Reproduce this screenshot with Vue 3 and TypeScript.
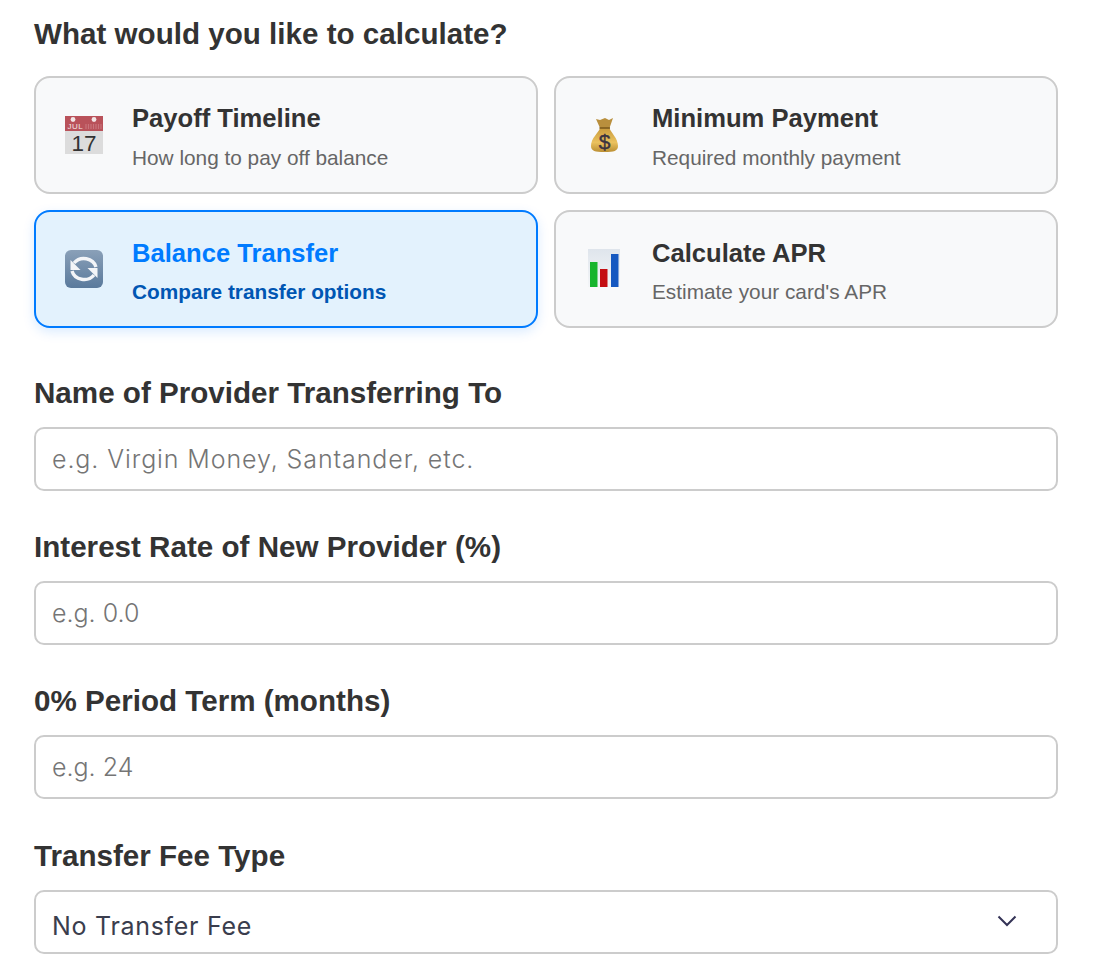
<script setup lang="ts">
interface Option { id: string; title: string; sub: string; active?: boolean }
const options: Option[] = [
  { id: 'cal', title: 'Payoff Timeline', sub: 'How long to pay off balance' },
  { id: 'bag', title: 'Minimum Payment', sub: 'Required monthly payment' },
  { id: 'swap', title: 'Balance Transfer', sub: 'Compare transfer options', active: true },
  { id: 'chart', title: 'Calculate APR', sub: "Estimate your card's APR" },
]
const fields = [
  { label: 'Name of Provider Transferring To', ph: 'e.g. Virgin Money, Santander, etc.', wide: true },
  { label: 'Interest Rate of New Provider (%)', ph: 'e.g. 0.0', wide: false },
  { label: '0% Period Term (months)', ph: 'e.g. 24', wide: false },
]
</script>

<template>
  <main class="page">
    <h2 class="heading">What would you like to calculate?</h2>
    <div class="grid">
      <button v-for="o in options" :key="o.id" class="card" :class="{ active: o.active }" type="button">
        <span class="icon">
          <svg v-if="o.id === 'cal'" viewBox="0 0 40 40" width="40" height="40">
            <rect x="1" y="1" width="38" height="38" fill="#dcdcdc" />
            <rect x="1" y="1" width="38" height="15" fill="#b9525a" />
            <path d="M22 9V14M24.5 9V14M27 9V14M29.5 9V14M32 9V14M34.5 9V14M37 9V14" stroke="#c9747b" stroke-width="1.2" />
            <circle cx="9" cy="4.5" r="2.4" fill="#f3e6e6" />
            <circle cx="30" cy="4.5" r="2.4" fill="#f3e6e6" />
            <text x="3.5" y="13.5" class="mon">JUL</text>
            <text x="20" y="35.5" class="day" text-anchor="middle">17</text>
          </svg>
          <svg v-else-if="o.id === 'bag'" viewBox="0 0 40 40" width="40" height="40">
            <defs>
              <linearGradient id="bagg" x1="0" y1="0" x2="0" y2="1">
                <stop offset="0" stop-color="#c89a3c" />
                <stop offset="0.6" stop-color="#ebc25e" />
                <stop offset="1" stop-color="#bb8f33" />
              </linearGradient>
            </defs>
            <path d="M12 4 L16 5 L21 3 L25 5 L29 3 L25.5 13 H16 Z" fill="#b98f3d" />
            <path d="M16 13 H25.5 C27 18 34 23 34 31 C34 36 30 37 20.5 37 C11 37 7 36 7 31 C7 23 14.5 18 16 13 Z" fill="url(#bagg)" />
            <path d="M15.5 13 H26" stroke="#7f5c1d" stroke-width="1.6" />
            <text x="20.5" y="33.5" class="dollar" text-anchor="middle">$</text>
          </svg>
          <svg v-else-if="o.id === 'swap'" viewBox="0 0 40 40" width="40" height="40">
            <defs>
              <linearGradient id="swapg" x1="0" y1="0" x2="0" y2="1">
                <stop offset="0" stop-color="#8aa0b8" />
                <stop offset="1" stop-color="#5a7a9c" />
              </linearGradient>
            </defs>
            <rect x="1" y="1" width="38" height="38" rx="6" fill="url(#swapg)" />
            <path d="M10 14 A12.5 11.5 0 0 1 32 18" fill="none" stroke="#f3f5f8" stroke-width="3.4" />
            <path d="M30 26 A12.5 11.5 0 0 1 8 22" fill="none" stroke="#f3f5f8" stroke-width="3.4" />
            <path d="M6.5 11 L6.5 21 L16.5 21 Z" fill="#f3f5f8" />
            <path d="M33.5 29 L33.5 19 L23.5 19 Z" fill="#f3f5f8" />
          </svg>
          <svg v-else viewBox="0 0 40 40" width="40" height="40">
            <defs>
              <linearGradient id="chartg" x1="0" y1="0" x2="0" y2="1">
                <stop offset="0" stop-color="#dfe5ec" />
                <stop offset="1" stop-color="#f4f6f8" />
              </linearGradient>
            </defs>
            <rect x="4" y="0" width="32" height="38" fill="url(#chartg)" />
            <rect x="6" y="13" width="7.5" height="25" fill="#17b52d" />
            <rect x="16" y="20" width="7.5" height="18" fill="#c40e12" />
            <rect x="27" y="5" width="7.5" height="33" fill="#1558c0" />
          </svg>
        </span>
        <span class="text">
          <span class="title">{{ o.title }}</span>
          <span class="sub">{{ o.sub }}</span>
        </span>
      </button>
    </div>

    <div v-for="f in fields" :key="f.label" class="field">
      <label class="label">{{ f.label }}</label>
      <input class="control" :class="{ wide: f.wide }" type="text" :placeholder="f.ph" />
    </div>

    <div class="field">
      <label class="label">Transfer Fee Type</label>
      <div class="select-wrap">
        <div class="control select-value">No Transfer Fee</div>
        <svg class="chevron" viewBox="0 0 20 12" width="20" height="12">
          <path d="M1.5 1.5 L10 10 L18.5 1.5" fill="none" stroke="#343356" stroke-width="2" />
        </svg>
      </div>
    </div>
  </main>
</template>

<style>
html, body { margin: 0; background: #fff; overflow: hidden; }
</style>

<style scoped>
.page {
  box-sizing: border-box;
  width: 1094px;
  height: 978px;
  overflow: hidden;
  padding: 16px 36px 0 34px;
  font-family: "Liberation Sans", Arial, sans-serif;
  color: #333;
}
.heading {
  margin: 0 0 24px;
  font-size: 29.6px;
  line-height: 36px;
  font-weight: 700;
}
.grid {
  display: grid;
  grid-template-columns: 1fr 1fr;
  gap: 16px;
  margin-bottom: 47px;
}
.card {
  box-sizing: border-box;
  height: 118px;
  display: flex;
  align-items: center;
  gap: 28px;
  padding: 0 28px;
  background: #f8f9fa;
  border: 2px solid #ccc;
  border-radius: 16px;
  font-family: inherit;
  text-align: left;
  color: #333;
}
.card.active {
  background: #e3f2fd;
  border-color: #007bff;
  box-shadow: 0 4px 12px rgba(0, 123, 255, 0.15);
}
.icon { display: flex; width: 40px; height: 40px; flex: none; }
.text { display: flex; flex-direction: column; gap: 12px; padding-top: 3px; }
.card:nth-child(n + 3) .text { gap: 11px; padding-top: 4px; }
.title { font-size: 25.6px; line-height: 30px; font-weight: 700; }
.sub { font-size: 20.8px; line-height: 26px; color: #666; }
.active .title { color: #007bff; }
.active .sub { color: #0056b3; font-weight: 700; }
.mon { font: 400 8px "Liberation Sans", sans-serif; fill: #f3e6e6; letter-spacing: 0.5px; }
.day { font: 400 22.5px "Liberation Sans", sans-serif; fill: #333; }
.dollar { font: 400 21px "Liberation Sans", sans-serif; fill: #3a3340; stroke: #3a3340; stroke-width: 0.4; }
.field { margin-bottom: 38.2px; }
.label {
  display: block;
  margin-bottom: 15.4px;
  font-size: 29.6px;
  line-height: 36.6px;
  font-weight: 700;
}
.control {
  box-sizing: border-box;
  display: block;
  width: 100%;
  height: 64px;
  padding: 0 16px;
  border: 2px solid #ccc;
  border-radius: 10px;
  background: #fff;
  font-family: "Inter", "Open Sans", sans-serif;
  font-size: 25px;
  font-weight: 300;
  color: #333;
  outline: none;
}
.wide { letter-spacing: 0.9px; }
.control::placeholder { color: #757575; opacity: 1; }
.select-wrap { position: relative; }
.select-value {
  display: flex;
  align-items: center;
  padding-top: 8px;
  font-weight: 400;
  letter-spacing: 0.7px;
  color: #3a3d4d;
}
.chevron { position: absolute; right: 41px; top: 25px; }
</style>
